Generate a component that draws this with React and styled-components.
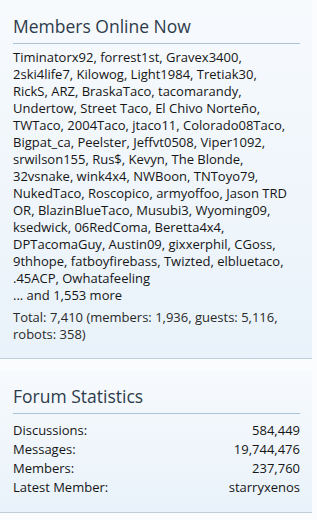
import React from "react";
import styled, { createGlobalStyle } from "styled-components";

const GlobalStyle = createGlobalStyle`
  body {
    margin: 0;
    background: #fafcfe;
    font-family: "Open Sans", "DejaVu Sans", sans-serif;
  }
`;

const Sidebar = styled.div`
  width: 312px;
  display: flex;
  flex-direction: column;
  gap: 12px;
`;

const Block = styled.section`
  background: linear-gradient(to bottom, #f7fafd 0%, #e9f2fa 100%);
  border-bottom: 1px solid #bfcedb;
  padding: ${(p) => p.$pad};
`;

const Heading = styled.h3`
  margin: 0 0 ${(p) => p.$gap || 5}px;
  padding-bottom: 5px;
  border-bottom: 1px solid #a9c2d8;
  font-size: 17.5px;
  font-weight: normal;
  color: #2d3c4b;
  line-height: 24px;
`;

const Names = styled.div`
  font-size: 13px;
  line-height: 17px;
  color: #161616;
`;

const NameLine = styled.div`
  white-space: nowrap;
`;

const Total = styled.div`
  margin-top: 5px;
  font-size: 13px;
  line-height: 17px;
  color: #2a2a2a;
`;

const StatRow = styled.div`
  display: flex;
  justify-content: space-between;
  font-size: 13px;
  line-height: 19px;
  color: #161616;
`;

const nameLines = [
  "Timinatorx92, forrest1st, Gravex3400,",
  "2ski4life7, Kilowog, Light1984, Tretiak30,",
  "RickS, ARZ, BraskaTaco, tacomarandy,",
  "Undertow, Street Taco, El Chivo Norteño,",
  "TWTaco, 2004Taco, jtaco11, Colorado08Taco,",
  "Bigpat_ca, Peelster, Jeffvt0508, Viper1092,",
  "srwilson155, Rus$, Kevyn, The Blonde,",
  "32vsnake, wink4x4, NWBoon, TNToyo79,",
  "NukedTaco, Roscopico, armyoffoo, Jason TRD",
  "OR, BlazinBlueTaco, Musubi3, Wyoming09,",
  "ksedwick, 06RedComa, Beretta4x4,",
  "DPTacomaGuy, Austin09, gixxerphil, CGoss,",
  "9thhope, fatboyfirebass, Twizted, elbluetaco,",
  ".45ACP, Owhatafeeling",
];

const stats = [
  ["Discussions:", "584,449"],
  ["Messages:", "19,744,476"],
  ["Members:", "237,760"],
  ["Latest Member:", "starryxenos"],
];

export default function App() {
  return (
    <>
      <GlobalStyle />
      <Sidebar>
        <Block $pad="14px 12px 15px 13px">
          <Heading>Members Online Now</Heading>
          <Names>
            {nameLines.map((l) => (
              <NameLine key={l}>{l}</NameLine>
            ))}
            <NameLine>... and 1,553 more</NameLine>
          </Names>
          <Total>Total: 7,410 (members: 1,936, guests: 5,116, robots: 358)</Total>
        </Block>
        <Block $pad="13px 12px 15px 13px">
          <Heading $gap={7}>Forum Statistics</Heading>
          {stats.map(([k, v]) => (
            <StatRow key={k}>
              <span>{k}</span>
              <span>{v}</span>
            </StatRow>
          ))}
        </Block>
      </Sidebar>
    </>
  );
}
